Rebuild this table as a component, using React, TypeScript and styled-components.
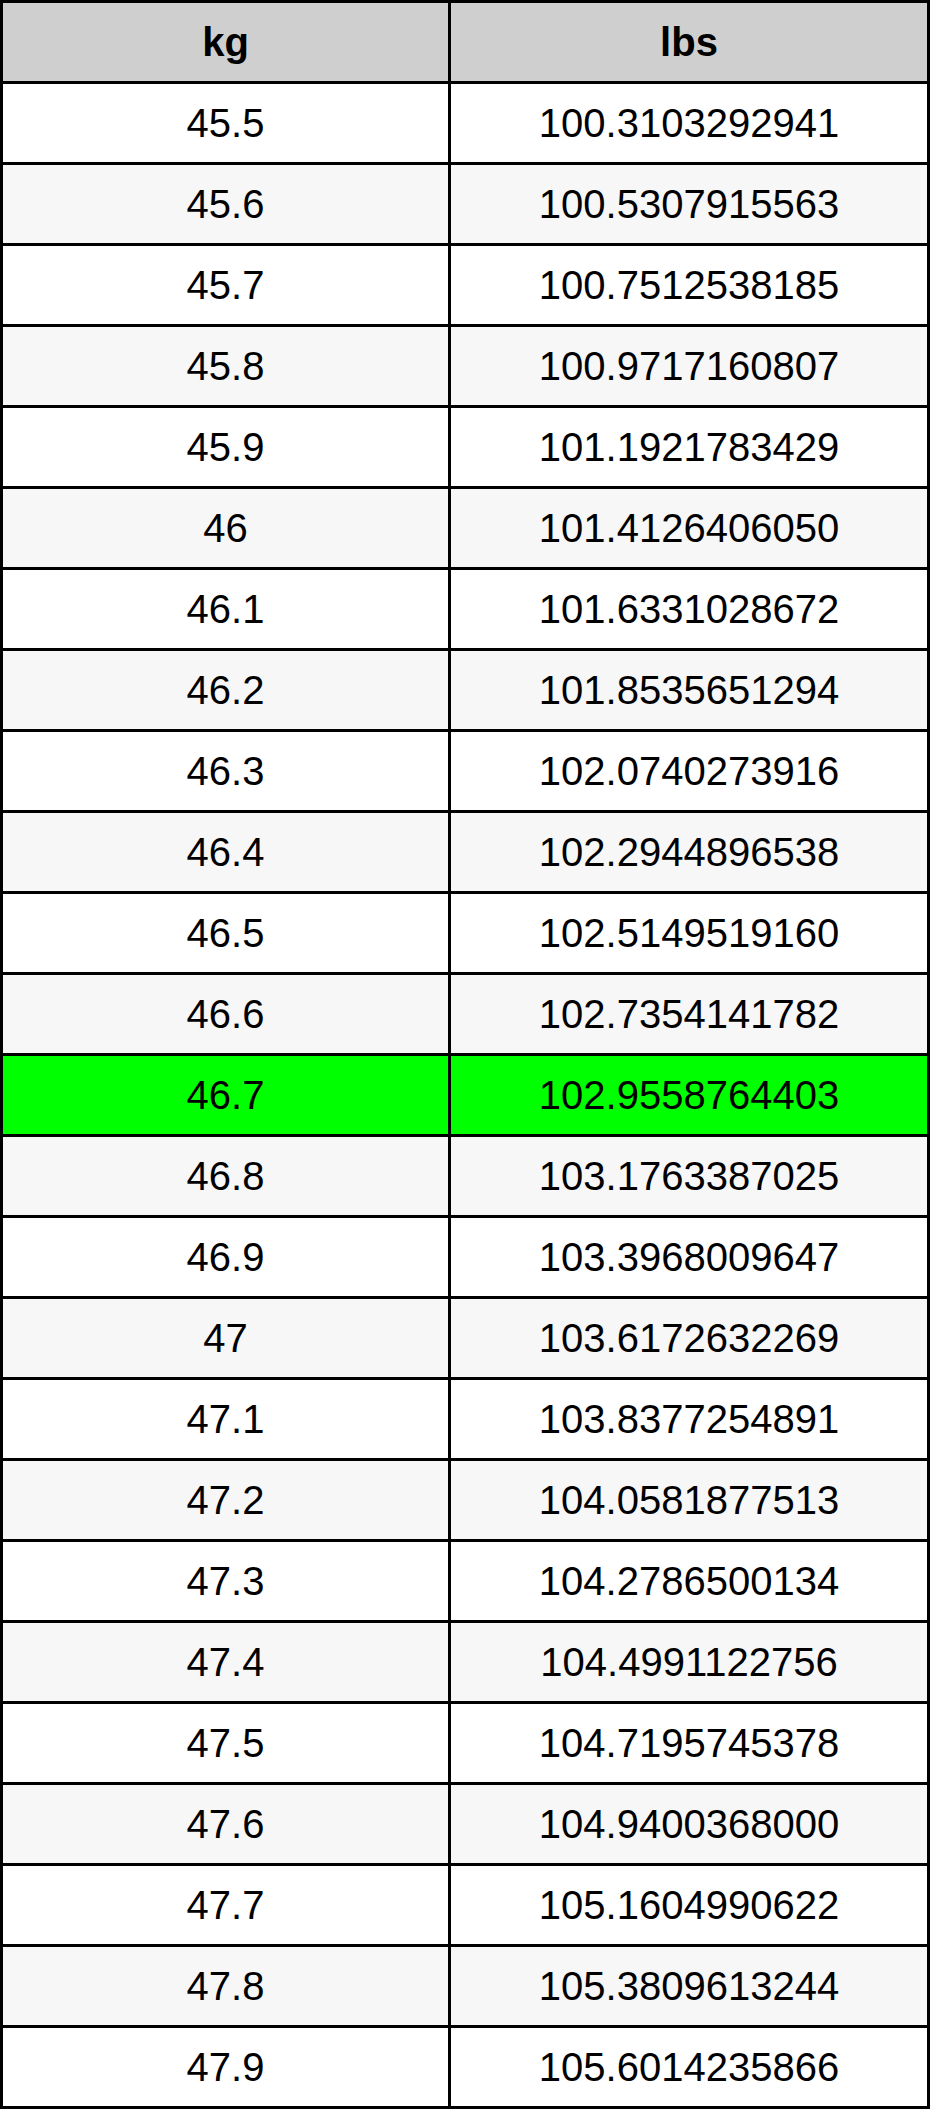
import styled, { createGlobalStyle } from "styled-components";

const GlobalStyle = createGlobalStyle`
  html, body {
    margin: 0;
    padding: 0;
    background: #ffffff;
  }
  body {
    font-family: "Liberation Sans", Arial, sans-serif;
  }
`;

const ROWS: [string, string][] = [
  ["45.5", "100.3103292941"],
  ["45.6", "100.5307915563"],
  ["45.7", "100.7512538185"],
  ["45.8", "100.9717160807"],
  ["45.9", "101.1921783429"],
  ["46", "101.4126406050"],
  ["46.1", "101.6331028672"],
  ["46.2", "101.8535651294"],
  ["46.3", "102.0740273916"],
  ["46.4", "102.2944896538"],
  ["46.5", "102.5149519160"],
  ["46.6", "102.7354141782"],
  ["46.7", "102.9558764403"],
  ["46.8", "103.1763387025"],
  ["46.9", "103.3968009647"],
  ["47", "103.6172632269"],
  ["47.1", "103.8377254891"],
  ["47.2", "104.0581877513"],
  ["47.3", "104.2786500134"],
  ["47.4", "104.4991122756"],
  ["47.5", "104.7195745378"],
  ["47.6", "104.9400368000"],
  ["47.7", "105.1604990622"],
  ["47.8", "105.3809613244"],
  ["47.9", "105.6014235866"],
];

const HIGHLIGHT = "46.7";

type Tone = "head" | "plain" | "shade" | "mark";

const TONES: Record<Tone, string> = {
  head: "#cfcfcf",
  plain: "#ffffff",
  shade: "#f7f7f7",
  mark: "#00ff00",
};

const Table = styled.div`
  width: 930px;
  box-sizing: border-box;
  display: flex;
  flex-direction: column;
  gap: 3px;
  padding: 3px;
  background: #000000;
`;

const Row = styled.div`
  display: grid;
  grid-template-columns: 445px 476px;
  gap: 3px;
  height: 78px;
`;

const Cell = styled.div<{ $tone: Tone }>`
  display: flex;
  align-items: center;
  justify-content: center;
  background: ${(p) => TONES[p.$tone]};
  color: #000000;
  font-size: 40px;
  font-weight: ${(p) => (p.$tone === "head" ? 700 : 400)};
  line-height: 1;
`;

const App = () => {
  return (
    <>
      <GlobalStyle />
      <Table>
        <Row>
          <Cell $tone="head">kg</Cell>
          <Cell $tone="head">lbs</Cell>
        </Row>
        {ROWS.map(([kg, lbs], i) => {
          const tone: Tone =
            kg === HIGHLIGHT ? "mark" : i % 2 === 0 ? "plain" : "shade";
          return (
            <Row key={kg}>
              <Cell $tone={tone}>{kg}</Cell>
              <Cell $tone={tone}>{lbs}</Cell>
            </Row>
          );
        })}
      </Table>
    </>
  );
};

export default App;
